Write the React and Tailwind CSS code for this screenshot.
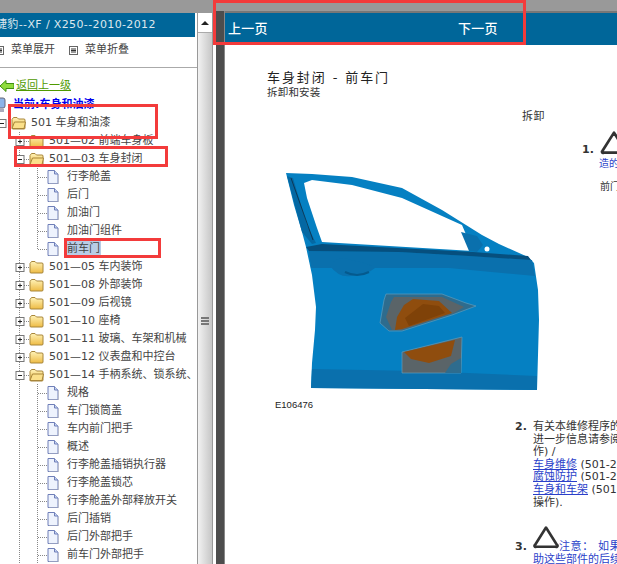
import React from "react";

const sans = "font-['DejaVu_Sans','Noto_Sans_CJK_SC',sans-serif]";
const doc = "font-['Liberation_Sans','Noto_Sans_CJK_SC',sans-serif]";

const tree = [
  { depth: 0, label: "501 车身和油漆", open: true },
  { depth: 1, label: "501—02 前端车身板" },
  { depth: 1, label: "501—03 车身封闭", open: true },
  { depth: 2, label: "行李舱盖" },
  { depth: 2, label: "后门" },
  { depth: 2, label: "加油门" },
  { depth: 2, label: "加油门组件" },
  { depth: 2, label: "前车门", selected: true, last: true },
  { depth: 1, label: "501—05 车内装饰" },
  { depth: 1, label: "501—08 外部装饰" },
  { depth: 1, label: "501—09 后视镜" },
  { depth: 1, label: "501—10 座椅" },
  { depth: 1, label: "501—11 玻璃、车架和机械" },
  { depth: 1, label: "501—12 仪表盘和中控台" },
  { depth: 1, label: "501—14 手柄系统、锁系统、", open: true },
  { depth: 2, label: "规格" },
  { depth: 2, label: "车门锁筒盖" },
  { depth: 2, label: "车内前门把手" },
  { depth: 2, label: "概述" },
  { depth: 2, label: "行李舱盖插销执行器" },
  { depth: 2, label: "行李舱盖锁芯" },
  { depth: 2, label: "行李舱盖外部释放开关" },
  { depth: 2, label: "后门插销" },
  { depth: 2, label: "后门外部把手" },
  { depth: 2, label: "前车门外部把手" },
];

const Expander = ({ cx, open }) => (
  <g>
    <rect x={cx - 3.5} y="5.5" width="8" height="8" fill="#fff" stroke="#777" />
    <path d={`M${cx - 1.5} 9.5h4`} stroke="#222" />
    {!open && <path d={`M${cx + 0.5} 7.5v4`} stroke="#222" />}
  </g>
);

// dotted guide lines + expander box in front of each tree row
const Guide = ({ depth, open, last }) => {
  const dots = { stroke: "#888", strokeDasharray: "1 1" };
  if (depth === 0) {
    return (
      <svg width="11" height="18" className="shrink-0">
        <Expander cx={1.5} open={open} />
      </svg>
    );
  }
  if (depth === 1) {
    return (
      <svg width="29" height="18" className="shrink-0">
        <path d="M19.5 0V18" {...dots} />
        <path d="M24 9.5H29" {...dots} />
        <Expander cx={19.5} open={open} />
      </svg>
    );
  }
  return (
    <svg width="47" height="18" className="shrink-0">
      <path d="M19.5 0V18" {...dots} />
      <path d={last ? "M37.5 0V9" : "M37.5 0V18"} {...dots} />
      <path d="M38 9.5H47" {...dots} />
    </svg>
  );
};

const Folder = ({ open }) => (
  <svg width="15" height="14" viewBox="0 0 15 14" className="shrink-0">
    <defs>
      <linearGradient id="fold" x1="0" y1="0" x2="0" y2="1">
        <stop offset="0" stopColor="#fff3b8" />
        <stop offset="1" stopColor="#eebb44" />
      </linearGradient>
    </defs>
    <path d="M1 3.5 2.5 1.5H6L7.5 3H13.5L14 4V12.5L13 13H2L1 12.5Z" fill="url(#fold)" stroke="#a8863a" />
    {open && <path d="M1 12.5 3.5 6H14.5L13 12.5Z" fill="#fbe08a" stroke="#a8863a" />}
  </svg>
);

const Page = () => (
  <svg width="12" height="14" viewBox="0 0 12 14" className="shrink-0">
    <path d="M1 .5H7.5L11 4V13.5H1Z" fill="#eef3fd" stroke="#6f7fb8" />
    <path d="M7.5 .5V4H11" fill="#c6d3f0" stroke="#6f7fb8" />
    <path d="M11.7 5V14H2" fill="none" stroke="#b9bcc9" />
  </svg>
);

const MenuIcon = () => (
  <svg width="9" height="9" viewBox="0 0 9 9" className="shrink-0">
    <rect x=".5" y=".5" width="8" height="8" fill="#fff" stroke="#666" />
    <path d="M2 3h5M2 4.5h5M2 6h5" stroke="#333" />
  </svg>
);

const Triangle = ({ w = 26, h = 24 }) => (
  <svg width={w} height={h} viewBox="0 0 26 24" className="shrink-0">
    <path d="M13 2.5 24 20a1 1 0 0 1-1 1.8H3A1 1 0 0 1 2 20Z" fill="none" stroke="#333" strokeWidth="2.6" strokeLinejoin="round" />
  </svg>
);

// viewBox uses screen coordinates so the outline is easy to compare to the picture
const Door = () => (
  <svg width="270" height="226" viewBox="280 170 270 226" className="block">
    <path
      fillRule="evenodd"
      fill="#0580c2"
      d="M287 173 313 174 353 177 403 188 443 210 483 235 500 244 529 257 535 263 539 290 540 320 538 390 312 388 313 363 316 330 317 307 313 275 307 247 303 232 295 205ZM305 183 313 180 353 185 403 198 463 225 474 251 323 242 318 228 308 198Z"
    />
    <path d="M310 251 400 252 470 256 533 260 536 276 450 268 312 268Z" fill="#0a70ad" />
    <path d="M307 247 323 244 474 252 529 256 532 260 470 256 400 252 310 251Z" fill="#064f7e" />
    <path d="M313 369 420 371 538 376 538 390 312 388Z" fill="#0a70ad" />
    <path d="M288 176 294 178 308 225 317 243 313 244 303 232Z" fill="#0468a3" />
    <path d="M292 178 314 240" stroke="#123" strokeWidth=".7" fill="none" />
    <path d="M462 232 478 236 484 245 478 252 470 251Z" fill="#0a70ad" />
    <circle cx="488" cy="249" r="2.5" fill="#fff" />
    <path d="M331 266Q340 254 352 260 372 264 376 268 368 275 352 276 340 278 331 266Z" fill="#0a70ad" />
    <path d="M346 272Q358 278 370 272" stroke="#055a8e" strokeWidth="2" fill="none" />
    <path d="M387 294 443 294 467 303 477 306 453 315 403 331 390 331 381 323 385 300Z" fill="#2e6c8e" stroke="#5f9cbc" strokeWidth=".7" />
    <path d="M395 297 443 297 465 307 455 313 403 330 393 330 387 317 392 302Z" fill="#5a6468" />
    <path d="M414 299 440 301 453 313 403 329 396 330 398 317 405 305Z" fill="#8f4d0e" />
    <path d="M424 304 440 306 446 313 410 326 406 318Z" fill="#7f4208" />
    <path d="M403 352 463 337 462 373 403 373Z" fill="#5a6468" stroke="#5f9cbc" strokeWidth=".7" />
    <path d="M405 352 456 340 452 356 430 363 412 359Z" fill="#8f4d0e" />
    <path d="M446 373 452 364 462 358 462 373Z" fill="#2e6c8e" />
  </svg>
);

const Line = ({ children, className = "" }) => (
  <div className={`h-[12.6px] leading-[12.6px] ${className}`}>{children}</div>
);

export default function App() {
  return (
    <div className="relative h-[564px] w-[617px] overflow-hidden bg-white">
      <div className="h-[11px] bg-[#999999]" />
      <div className="flex h-[553px]">
        {/* left menu */}
        <div className="w-[197px] shrink-0 overflow-hidden">
          <div className="h-[2px] bg-[#999999]" />
          <div className={`flex h-[24px] w-[195px] items-center overflow-hidden bg-[#006699] whitespace-nowrap text-[11px] tracking-[0.37px] text-[#dde8ee] ${sans}`}>
            <span className="ml-[-4px]">捷豹--XF / X250--2010-2012</span>
          </div>
          <div className={`flex h-[31px] items-start border-b border-[#aaaaaa] pt-[5px] text-[11px] text-[#444] ${sans}`}>
            <div className="ml-[-5px] flex w-[74px] items-center gap-[7px]">
              <MenuIcon />
              <span>菜单展开</span>
            </div>
            <div className="flex items-center gap-[7px]">
              <MenuIcon />
              <span>菜单折叠</span>
            </div>
          </div>
          <div className={`mt-[8px] flex h-[20px] items-center gap-[2px] text-[11px] ${sans}`}>
            <svg width="14" height="12" viewBox="0 0 14 12" className="shrink-0">
              <path d="M0 6 6 .5V3.5H14V8.5H6V11.5Z" fill="#8fdc3c" stroke="#3f8f10" />
            </svg>
            <a className="text-[#4f9a00] underline">返回上一级</a>
          </div>
          <div className={`flex h-[18px] items-center gap-[7px] text-[11px] font-bold text-[#0000ee] ${sans}`}>
            <svg width="6" height="16" viewBox="0 0 6 16" className="shrink-0">
              <rect x="-6" y="1" width="11" height="10" rx="2" fill="#8db4e8" stroke="#667" />
              <rect x="-6" y="12" width="10" height="3" fill="#aab" />
            </svg>
            <span>当前:车身和油漆</span>
          </div>
          <div className={`text-[11px] text-[#444] ${sans}`}>
            {tree.map((row) => (
              <div key={row.label} className="flex h-[18px] items-center whitespace-nowrap">
                <Guide depth={row.depth} open={row.open} last={row.last} />
                {row.depth === 2 ? <Page /> : <Folder open={row.open} />}
                <span className={`${row.depth === 2 ? "ml-[7px] px-px" : "ml-[5px]"} ${row.selected ? "bg-[#b9cde6]" : ""}`}>
                  {row.label}
                </span>
              </div>
            ))}
          </div>
        </div>

        {/* menu scrollbar */}
        <div className="flex w-[16px] shrink-0 flex-col overflow-hidden border-x border-[#999999]">
          <div className="h-[2px] shrink-0 bg-[#999999]" />
          <div className="flex h-[19px] shrink-0 items-center justify-center">
            <div className="h-0 w-0 border-x-[4px] border-b-[4px] border-x-transparent border-b-[#222]" />
          </div>
          <div className="flex h-[576px] shrink-0 items-center justify-center border-t border-[#aaaaaa] bg-linear-to-r from-[#f2f2f2] to-[#c6c6c6]">
            <div className="flex w-[8px] flex-col gap-[1px]">
              <div className="h-[2px] bg-[#777]" />
              <div className="h-[2px] bg-[#777]" />
              <div className="h-[2px] bg-[#777]" />
            </div>
          </div>
        </div>

        {/* splitter */}
        <div className="ml-[3px] flex w-[9px] shrink-0 border-r border-[#888] bg-[#4d4d4d]" />

        {/* document */}
        <div className="min-w-0 flex-1">
          <div className="h-[2px] bg-[#777777]" />
          <div className={`flex h-[32px] items-center bg-[#006699] text-[13px] font-medium text-white ${doc}`}>
            <span className="ml-[3px] w-[230px] tracking-[0.3px]">上一页</span>
            <span className="tracking-[0.3px]">下一页</span>
          </div>
          <div className={`pl-[42px] text-[11px] text-[#333] ${sans}`}>
            <div className="mt-[25px] text-[13px] leading-[16px] tracking-[1.9px] text-[#222]">车身封闭 - 前车门</div>
            <div className="text-[10.5px] leading-[13px] tracking-[0.2px]">拆卸和安装</div>
            <div className="ml-[255px] mt-[11px] leading-[14px] tracking-[0.5px]">拆卸</div>

            <div className="mt-[6px] flex">
              <div className="ml-[12px] w-[303px] shrink-0 pt-[40px]">
                <Door />
                <div className={`ml-[-4px] mt-[3px] text-[9.5px] leading-[12px] text-[#222] ${doc}`}>E106476</div>
              </div>
              <div className="whitespace-nowrap">
                <div className="flex items-end">
                  <span className="mb-[-2px] w-[18px] font-bold leading-[14px]">1.</span>
                  <Triangle w={28} h={25} />
                </div>
                <div className="ml-[17px] mt-[2px] text-[10px] leading-[13px] text-[#2b3fc9]">造的</div>
                <div className="ml-[18px] mt-[10px] text-[10px] leading-[13px]">前门</div>
              </div>
            </div>

            <div className="ml-[248px] mt-[10px] flex whitespace-nowrap">
              <span className="w-[18px] shrink-0 font-bold leading-[12.6px]">2.</span>
              <div>
                <Line>有关本维修程序的</Line>
                <Line>进一步信息请参阅</Line>
                <Line>作) /</Line>
                <Line><a className="text-[#2b3fc9] underline">车身维修</a> (501-2</Line>
                <Line><a className="text-[#2b3fc9] underline">腐蚀防护</a> (501-2</Line>
                <Line><a className="text-[#2b3fc9] underline">车身和车架</a> (501</Line>
                <Line>操作).</Line>
              </div>
            </div>

            <div className="ml-[248px] mt-[16px] flex items-end whitespace-nowrap">
              <span className="mb-[-4px] w-[18px] shrink-0 font-bold leading-[13px]">3.</span>
              <Triangle />
              <span className="mb-[-4px] leading-[13px] tracking-[0.6px] text-[#2b3fc9]">注意： 如果</span>
            </div>
            <div className="ml-[266px] mt-[4px] whitespace-nowrap leading-[13px] text-[#2b3fc9]">助这些部件的后续</div>
          </div>
        </div>
      </div>

      {/* red annotation boxes drawn on top of the screenshot */}
      <div className="absolute left-[8px] top-[104px] h-[35px] w-[150px] border-[3px] border-[#f33b3b]" />
      <div className="absolute left-[14px] top-[146px] h-[21px] w-[154px] border-[3px] border-[#f33b3b]" />
      <div className="absolute left-[64px] top-[238px] h-[20px] w-[97px] border-[3px] border-[#f33b3b]" />
      <div className="absolute left-[213px] top-0 h-[45px] w-[313px] border-[3px] border-[#f33b3b]" />
    </div>
  );
}
